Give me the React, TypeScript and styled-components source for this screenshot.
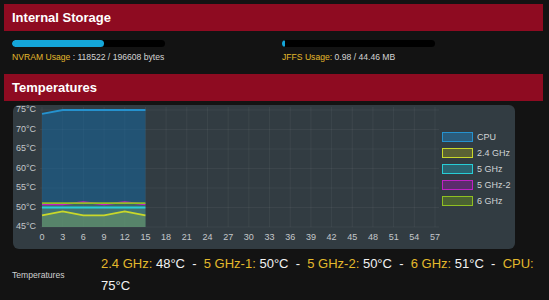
import React from 'react';
import styled, { createGlobalStyle } from 'styled-components';

const GlobalStyle = createGlobalStyle`
  html, body {
    margin: 0;
    padding: 0;
    background: #131313;
  }
  body {
    font-family: "Liberation Sans", Arial, sans-serif;
    color: #d8d8d8;
  }
`;

type Series = { name: string; line: string; fill: string; box: string; values: number[] };

const SERIES: Series[] = [
  { name: 'CPU', line: '#2592cf', fill: 'rgba(18,105,165,0.5)', box: '#2a5c7c', values: [74, 75, 75, 75, 75, 75] },
  { name: '2.4 GHz', line: '#c9d82a', fill: 'rgba(200,215,40,0.22)', box: '#5b6234', values: [48, 49, 48, 48, 49, 48] },
  { name: '5 GHz', line: '#27cdd6', fill: 'rgba(40,205,215,0.16)', box: '#2b6470', values: [50, 50, 50, 50, 50, 50] },
  { name: '5 GHz-2', line: '#c021c6', fill: 'rgba(190,30,200,0.08)', box: '#5c2c6c', values: [50.8, 50.8, 51.4, 50.8, 51.4, 50.8] },
  { name: '6 GHz', line: '#8fbf22', fill: 'rgba(140,190,35,0.2)', box: '#4a6232', values: [51.1, 51.1, 51.1, 51.1, 51.1, 51.1] },
];

const READINGS = [
  { label: '2.4 GHz', value: '48°C' },
  { label: '5 GHz-1', value: '50°C' },
  { label: '5 GHz-2', value: '50°C' },
  { label: '6 GHz', value: '51°C' },
  { label: 'CPU', value: '75°C' },
];

const xOf = (v: number) => 29 + v * 6.895;
const yOf = (t: number) => 5 + (75 - t) * 3.9;

const TempChart: React.FC = () => {
  const xTicks = Array.from({ length: 20 }, (_, i) => i * 3);
  const yTicks = [75, 70, 65, 60, 55, 50, 45];
  const bottom = yOf(45);

  return (
    <ChartSvg width={427} height={144} viewBox="0 0 427 144">
      {xTicks.map((t) => (
        <line key={'gx' + t} x1={xOf(t)} x2={xOf(t)} y1={2} y2={bottom} stroke="rgba(255,255,255,0.05)" />
      ))}
      {yTicks.map((t) => (
        <line key={'gy' + t} x1={27} x2={426} y1={yOf(t)} y2={yOf(t)} stroke="rgba(255,255,255,0.05)" />
      ))}
      {SERIES.map((s) => {
        const pts = s.values.map((v, i) => `${xOf(i * 3)},${yOf(v)}`).join(' ');
        const area = `${xOf(0)},${bottom} ${pts} ${xOf(15)},${bottom}`;
        return <polygon key={'f' + s.name} points={area} fill={s.fill} />;
      })}
      {SERIES.map((s) => {
        const pts = s.values.map((v, i) => `${xOf(i * 3)},${yOf(v)}`).join(' ');
        return <polyline key={'l' + s.name} points={pts} fill="none" stroke={s.line} strokeWidth={1.8} />;
      })}
      {yTicks.map((t) => (
        <AxisText key={'ty' + t} x={23} y={yOf(t)} textAnchor="end" dominantBaseline="middle">
          {t}°C
        </AxisText>
      ))}
      {xTicks.map((t) => (
        <AxisText key={'tx' + t} x={xOf(t)} y={133} textAnchor="middle" dominantBaseline="middle">
          {t}
        </AxisText>
      ))}
    </ChartSvg>
  );
};

const UsageBar: React.FC<{ used: number; total: number }> = ({ used, total }) => (
  <BarTrack>
    <BarFill style={{ width: Math.max(3, (used / total) * 153) }} />
  </BarTrack>
);

const App: React.FC = () => {
  return (
    <Page>
      <GlobalStyle />
      <SectionHeader>Internal Storage</SectionHeader>
      <StorageGrid>
        <StorageCol>
          <UsageBar used={118522} total={196608} />
          <UsageLabel>
            <Key>NVRAM Usage</Key> : 118522 / 196608 bytes
          </UsageLabel>
        </StorageCol>
        <StorageCol>
          <UsageBar used={0.98} total={44.46} />
          <UsageLabel>
            <Key>JFFS Usage:</Key> 0.98 / 44.46 MB
          </UsageLabel>
        </StorageCol>
      </StorageGrid>

      <SectionHeader>Temperatures</SectionHeader>
      <ChartPanel>
        <TempChart />
        <Legend>
          {SERIES.map((s) => (
            <LegendRow key={s.name}>
              <LegendBox $border={s.line} $fill={s.box} />
              {s.name}
            </LegendRow>
          ))}
        </Legend>
      </ChartPanel>

      <ReadingRow>
        <RowLabel>Temperatures</RowLabel>
        <Readings>
          {READINGS.map((r, i) => (
            <React.Fragment key={r.label}>
              <Key>{r.label}:</Key> {r.value}
              {i < READINGS.length - 1 && <Sep>{'  -  '}</Sep>}
            </React.Fragment>
          ))}
        </Readings>
      </ReadingRow>
    </Page>
  );
};

export default App;

const Page = styled.div`
  width: 539px;
  padding: 4px;
`;

const SectionHeader = styled.div`
  display: flex;
  align-items: center;
  height: 27px;
  padding-left: 8px;
  background: #8e0b21;
  color: #fff;
  font-size: 13px;
  font-weight: 700;
`;

const StorageGrid = styled.div`
  display: grid;
  grid-template-columns: 270px 269px;
  padding: 9px 0 11px;
`;

const StorageCol = styled.div`
  padding-left: 8px;
`;

const BarTrack = styled.div`
  width: 153px;
  height: 7px;
  background: #000;
  border-radius: 4px;
  overflow: hidden;
`;

const BarFill = styled.div`
  height: 100%;
  background: #14a6d9;
  border-radius: 4px;
`;

const UsageLabel = styled.div`
  margin-top: 5px;
  font-size: 8.6px;
  line-height: 11px;
  color: #d4d4d4;
`;

const Key = styled.span`
  color: #e3b92c;
`;

const ChartPanel = styled.div`
  display: flex;
  width: 502px;
  height: 144px;
  margin: 4px 0 0 9px;
  background: #323c42;
  border-radius: 6px;
`;

const ChartSvg = styled.svg`
  display: block;
  flex: none;
`;

const AxisText = styled.text`
  font-family: "Liberation Sans", Arial, sans-serif;
  font-size: 9px;
  fill: #c4c8cb;
`;

const Legend = styled.div`
  display: flex;
  flex-direction: column;
  gap: 6px;
  margin: 27px 0 0 2px;
`;

const LegendRow = styled.div`
  display: flex;
  align-items: center;
  gap: 4px;
  height: 10px;
  font-size: 9px;
  color: #d0d4d6;
`;

const LegendBox = styled.span<{ $border: string; $fill: string }>`
  box-sizing: border-box;
  width: 31px;
  height: 10px;
  border: 1.5px solid ${({ $border }) => $border};
  background: ${({ $fill }) => $fill};
`;

const ReadingRow = styled.div`
  display: flex;
  align-items: center;
  margin-top: 4px;
`;

const RowLabel = styled.div`
  width: 97px;
  padding-left: 8px;
  box-sizing: border-box;
  flex: none;
  font-size: 8.6px;
  color: #d0d0d0;
`;

const Readings = styled.div`
  width: 442px;
  font-size: 13px;
  line-height: 22px;
  color: #f2f2f2;
`;

const Sep = styled.span`
  white-space: pre;
  color: #f2f2f2;
`;
